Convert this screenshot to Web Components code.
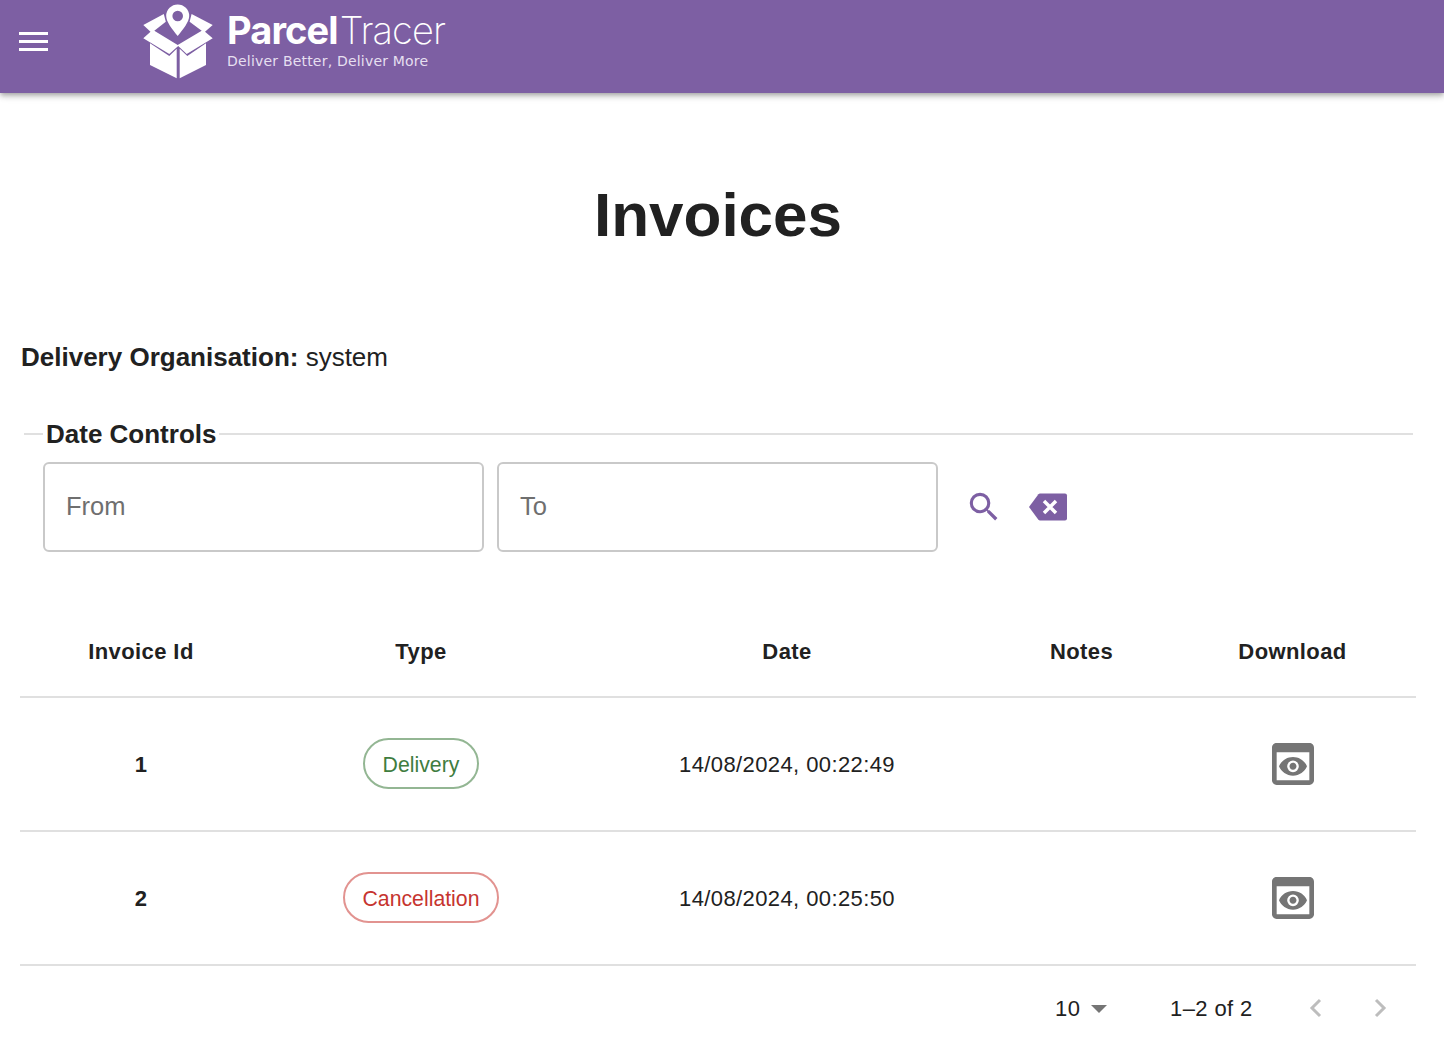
<!DOCTYPE html>
<html lang="en">
<head>
<meta charset="utf-8">
<title>Invoices</title>
<style>
    html, body { margin: 0; background: #fff; }
    body { font-family: 'Liberation Sans', Arial, sans-serif; color: #212121; }
</style>
</head>
<body>
<app-shell>
    <app-header></app-header>
    <invoices-page organisation="system">
        <date-controls></date-controls>
        <invoice-table>
            <invoice-row invoice-id="1" type="Delivery" date="14/08/2024, 00:22:49"></invoice-row>
            <invoice-row invoice-id="2" type="Cancellation" date="14/08/2024, 00:25:50"></invoice-row>
        </invoice-table>
        <table-pager></table-pager>
    </invoices-page>
</app-shell>

<script>
// small helper, every element here just stamps its markup in an open shadow root
function stamp(el, html) {
    const root = el.shadowRoot || el.attachShadow({ mode: 'open' });
    root.innerHTML = html;
    return root;
}

class AppShell extends HTMLElement {
    connectedCallback() {
        stamp(this, `
            <style>
                :host { display: flex; flex-direction: column; height: 1050px; overflow: hidden; }
            </style>
            <slot></slot>
        `);
    }
}

class AppHeader extends HTMLElement {
    connectedCallback() {
        stamp(this, `
            <style>
                :host {
                    display: flex;
                    align-items: flex-start;
                    flex: none;
                    height: 93px;
                    background: #7d5fa3;
                    box-shadow: 0 2px 4px -1px rgba(0,0,0,.2), 0 4px 5px 0 rgba(0,0,0,.14), 0 1px 10px 0 rgba(0,0,0,.12);
                    position: relative;
                    z-index: 2;
                }
                .menu { margin: 26px 0 0 16px; width: 34px; height: 30px; display: block; }
                parcel-logo { margin: 4px 0 0 93px; }
            </style>
            <svg class="menu" viewBox="0 0 34 30" aria-label="menu">
                <rect x="3" y="6" width="29" height="3" fill="#fff"/>
                <rect x="3" y="14" width="29" height="3" fill="#fff"/>
                <rect x="3" y="22" width="29" height="3" fill="#fff"/>
            </svg>
            <parcel-logo></parcel-logo>
        `);
    }
}

class ParcelLogo extends HTMLElement {
    connectedCallback() {
        stamp(this, `
            <style>
                :host { display: flex; align-items: flex-start; gap: 12px; color: #fff; }
                svg { display: block; width: 72px; height: 76px; flex: none; }
                .words { display: flex; flex-direction: column; padding-top: 5px; }
                .name {
                    font-family: Inter, 'Noto Sans', sans-serif;
                    font-size: 38px;
                    line-height: 42px;
                    letter-spacing: -.9px;
                    white-space: nowrap;
                }
                .name b { font-weight: 700; }
                .name span { font-weight: 200; margin-left: 2px; }
                .tag {
                    font-family: 'DejaVu Sans', sans-serif;
                    font-size: 14px;
                    letter-spacing: .2px;
                    line-height: 16px;
                    margin-top: 2px;
                    color: #e6dff0;
                    white-space: nowrap;
                }
            </style>
            <svg viewBox="0 0 72 76">
                <!-- pin -->
                <path fill="#fff" fill-rule="evenodd" d="M34.700 .5a11.500 11.500 0 0 1 11.500 11.500c0 6-6 13-11.500 20-5.500-7-11.500-14-11.500-20A11.500 11.500 0 0 1 34.700 .5zm0 6.200a5.300 5.300 0 1 0 0 10.600 5.300 5.300 0 0 0 0-10.600z"/>
                <!-- flaps -->
                <path fill="#fff" d="M.3 21 20.800 10 22.800 17.700 11.300 26.700 34.700 41 58.700 26.700 46.600 17.700 48.600 10 69.700 21 62 27.700 69.700 34.300 43.700 50 35.200 42 26.300 50 .3 34.300 7.500 27.700z"/>
                <!-- box -->
                <path fill="#fff" d="M7 39.300 26.300 52 33.700 44.700V74.300L7 61z"/>
                <path fill="#fff" d="M63 39.300 44.300 52 36.700 44.700V74.300L63 61z"/>
            </svg>
            <div class="words">
                <div class="name"><b>Parcel</b><span>Tracer</span></div>
                <div class="tag">Deliver Better, Deliver More</div>
            </div>
        `);
    }
}

class InvoicesPage extends HTMLElement {
    connectedCallback() {
        stamp(this, `
            <style>
                :host { display: block; padding: 0 28px 0 20px; flex: 1; }
                h1 {
                    margin: 88px 0 0;
                    font-size: 62px;
                    line-height: 68px;
                    font-weight: 700;
                    text-align: center;
                    color: #212121;
                }
                .org { margin: 93px 0 0 1px; font-size: 26px; line-height: 30px; }
                .org b { font-weight: 700; }
            </style>
            <h1>Invoices</h1>
            <div class="org"><b>Delivery Organisation:</b> ${this.getAttribute('organisation')}</div>
            <slot></slot>
        `);
    }
}

class DateControls extends HTMLElement {
    connectedCallback() {
        stamp(this, `
            <style>
                :host { display: block; margin: 47px 3px 0 4px; }
                fieldset {
                    margin: 0;
                    padding: 13px 19px 0;
                    border: 0;
                    border-top: 2px solid #e0e0e0;
                    min-width: 0;
                }
                legend {
                    margin-left: 0;
                    padding: 0 3px;
                    font-size: 26px;
                    font-weight: 700;
                    line-height: 30px;
                    color: #212121;
                }
                .row { display: flex; align-items: center; }
                date-field + date-field { margin-left: 13px; }
                .search { margin-left: 27px; width: 38px; height: 38px; display: block; }
                .clear { margin-left: 25px; width: 40px; height: 32px; display: block; }
            </style>
            <fieldset>
                <legend>Date Controls</legend>
                <div class="row">
                    <date-field label="From"></date-field>
                    <date-field label="To"></date-field>
                    <svg class="search" viewBox="0 0 24 24" fill="#7d5fa3">
                        <path d="M15.500 14h-.79l-.28-.27A6.470 6.470 0 0 0 16 9.500 6.500 6.500 0 1 0 9.500 16c1.610 0 3.090-.59 4.230-1.570l.27.28v.79l5 4.990L20.490 19l-4.990-5zm-6 0C7.010 14 5 11.990 5 9.500S7.010 5 9.500 5 14 7.010 14 9.500 11.990 14 9.500 14z"/>
                    </svg>
                    <svg class="clear" viewBox="0 0 40 32" fill="#7d5fa3">
                        <path d="M12 2.500h25a2 2 0 0 1 2 2v23a2 2 0 0 1-2 2H12a2 2 0 0 1-1.600-.8L1 16 10.400 3.300A2 2 0 0 1 12 2.500z"/>
                        <path d="M16 10l12 12M28 10 16 22" stroke="#fff" stroke-width="3.500" fill="none"/>
                    </svg>
                </div>
            </fieldset>
        `);
    }
}

class DateField extends HTMLElement {
    connectedCallback() {
        stamp(this, `
            <style>
                :host {
                    display: flex;
                    align-items: center;
                    box-sizing: border-box;
                    width: 441px;
                    height: 90px;
                    padding: 0 0 2px 21px;
                    border: 2px solid #c9c9c9;
                    border-radius: 6px;
                    font-size: 25.500px;
                    color: #6f6f6f;
                }
            </style>
            ${this.getAttribute('label')}
        `);
    }
}

const COLUMNS = '242px 318px 414px 175px 247px';

class InvoiceTable extends HTMLElement {
    connectedCallback() {
        stamp(this, `
            <style>
                :host { display: block; margin-top: 57px; }
                .head {
                    display: grid;
                    grid-template-columns: ${COLUMNS};
                    box-sizing: border-box;
                    height: 89px;
                    padding-bottom: 2px;
                    align-items: center;
                    border-bottom: 2px solid #e0e0e0;
                    font-size: 22px;
                    letter-spacing: .4px;
                    font-weight: 700;
                    text-align: center;
                    color: #212121;
                }
            </style>
            <div class="head">
                <div>Invoice Id</div>
                <div>Type</div>
                <div>Date</div>
                <div>Notes</div>
                <div>Download</div>
            </div>
            <slot></slot>
        `);
    }
}

class InvoiceRow extends HTMLElement {
    connectedCallback() {
        const type = this.getAttribute('type');
        stamp(this, `
            <style>
                :host {
                    display: grid;
                    grid-template-columns: ${COLUMNS};
                    height: 132px;
                    align-items: center;
                    justify-items: center;
                    border-bottom: 2px solid #e0e0e0;
                    font-size: 22px;
                    letter-spacing: .4px;
                    color: #212121;
                }
                .id { font-weight: 700; }
                .txt { padding-top: 2px; }
                svg { display: block; width: 56px; height: 56px; }
            </style>
            <div class="id txt">${this.getAttribute('invoice-id')}</div>
            <status-chip tone="${type === 'Delivery' ? 'good' : 'bad'}">${type}</status-chip>
            <div class="txt">${this.getAttribute('date')}</div>
            <div></div>
            <svg viewBox="0 0 24 24" fill="#757575">
                <path d="M19 3H5c-1.110 0-2 .9-2 2v14c0 1.100.89 2 2 2h14c1.100 0 2-.9 2-2V5c0-1.100-.89-2-2-2zm0 16H5V7h14v12zm-5.500-6c0 .83-.67 1.500-1.500 1.500s-1.500-.67-1.500-1.500.67-1.500 1.500-1.500 1.500.67 1.500 1.500zM12 9c-2.730 0-5.060 1.660-6 4 .94 2.340 3.270 4 6 4s5.060-1.660 6-4c-.94-2.340-3.270-4-6-4zm0 6.500a2.500 2.500 0 0 1 0-5 2.500 2.500 0 0 1 0 5z"/>
            </svg>
        `);
    }
}

class StatusChip extends HTMLElement {
    connectedCallback() {
        stamp(this, `
            <style>
                :host {
                    display: inline-flex;
                    align-items: center;
                    box-sizing: border-box;
                    height: 51px;
                    margin-top: -2px;
                    padding: 4px 18px 0;
                    border-radius: 26px;
                    border: 2px solid #93b693;
                    color: #3f7d3f;
                    font-size: 21.250px;
                    letter-spacing: 0;
                }
                :host([tone="bad"]) { border-color: #e29390; color: #c6342f; }
            </style>
            <slot></slot>
        `);
    }
}

class TablePager extends HTMLElement {
    connectedCallback() {
        stamp(this, `
            <style>
                :host {
                    display: flex;
                    align-items: center;
                    height: 86px;
                    padding-left: 1035px;
                    font-size: 22px;
                    letter-spacing: .4px;
                    color: #212121;
                }
                .size { width: 25px; }
                .caret { margin-left: 11px; width: 16px; height: 8px; display: block; }
                .range { margin-left: 63px; width: 82px; white-space: nowrap; }
                .chev { width: 16px; height: 22px; display: block; margin-top: -2px; }
                .prev { margin-left: 56px; }
                .next { margin-left: 48px; }
            </style>
            <span class="size">10</span>
            <svg class="caret" viewBox="0 0 16 8"><path d="M0 0h16L8 8z" fill="#757575"/></svg>
            <span class="range">1–2 of 2</span>
            <svg class="chev prev" viewBox="0 0 16 22"><path d="M12 3 4 11l8 8" fill="none" stroke="#bdbdbd" stroke-width="3"/></svg>
            <svg class="chev next" viewBox="0 0 16 22"><path d="M4 3l8 8-8 8" fill="none" stroke="#bdbdbd" stroke-width="3"/></svg>
        `);
    }
}

customElements.define('app-shell', AppShell);
customElements.define('app-header', AppHeader);
customElements.define('parcel-logo', ParcelLogo);
customElements.define('invoices-page', InvoicesPage);
customElements.define('date-controls', DateControls);
customElements.define('date-field', DateField);
customElements.define('invoice-table', InvoiceTable);
customElements.define('invoice-row', InvoiceRow);
customElements.define('status-chip', StatusChip);
customElements.define('table-pager', TablePager);
</script>
</body>
</html>
